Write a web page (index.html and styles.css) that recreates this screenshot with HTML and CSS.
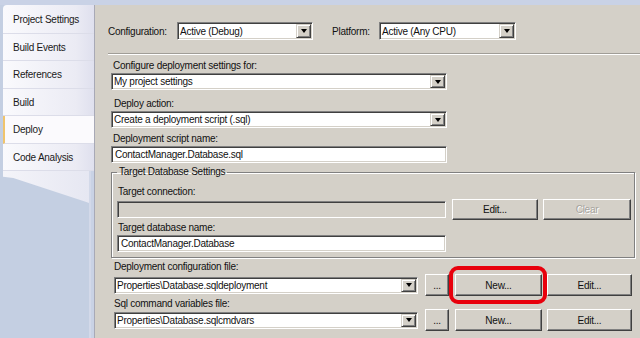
FILE: index.html
```html
<!DOCTYPE html>
<html lang="en">
<head>
    <meta charset="UTF-8">
    <meta name="viewport" content="width=device-width, initial-scale=1.0">
    <title>Project Properties - Deploy</title>
    <link rel="stylesheet" href="styles.css">
</head>
<body>
    <div class="window">
        <div class="sidebar">
            <ul class="tabs">
                <li class="tab">Project Settings</li>
                <li class="tab">Build Events</li>
                <li class="tab">References</li>
                <li class="tab">Build</li>
                <li class="tab active">Deploy</li>
                <li class="tab">Code Analysis</li>
            </ul>
            <div class="tabs-tail"></div>
        </div>

        <div class="panel">
            <div class="config-row">
                <span class="config-label">Configuration:</span>
                <div class="combo combo-config">
                    <span class="combo-text">Active (Debug)</span>
                    <span class="combo-btn"></span>
                </div>
                <span class="platform-label">Platform:</span>
                <div class="combo combo-platform">
                    <span class="combo-text">Active (Any CPU)</span>
                    <span class="combo-btn"></span>
                </div>
            </div>
            <div class="separator"></div>

            <div class="form">
                <div class="field-label">Configure deployment settings for:</div>
                <div class="combo wide">
                    <span class="combo-text">My project settings</span>
                    <span class="combo-btn"></span>
                </div>

                <div class="field-label deploy-action">Deploy action:</div>
                <div class="combo wide">
                    <span class="combo-text">Create a deployment script (.sql)</span>
                    <span class="combo-btn"></span>
                </div>

                <div class="field-label">Deployment script name:</div>
                <div class="textbox wide">ContactManager.Database.sql</div>

                <fieldset class="group">
                    <legend>Target Database Settings</legend>
                    <div class="group-label first">Target connection:</div>
                    <div class="group-row">
                        <div class="textbox group-field disabled"></div>
                        <button class="btn btn-edit">Edit...</button>
                        <button class="btn btn-clear" disabled>Clear</button>
                    </div>
                    <div class="group-label">Target database name:</div>
                    <div class="textbox group-field">ContactManager.Database</div>
                </fieldset>

                <div class="field-label file-label">Deployment configuration file:</div>
                <div class="file-row">
                    <div class="combo file-combo">
                        <span class="combo-text">Properties\Database.sqldeployment</span>
                        <span class="combo-btn"></span>
                    </div>
                    <button class="btn btn-browse">...</button>
                    <div class="highlight">
                        <button class="btn btn-new">New...</button>
                    </div>
                    <button class="btn btn-file-edit">Edit...</button>
                </div>

                <div class="field-label sql-label">Sql command variables file:</div>
                <div class="file-row">
                    <div class="combo file-combo">
                        <span class="combo-text">Properties\Database.sqlcmdvars</span>
                        <span class="combo-btn"></span>
                    </div>
                    <button class="btn btn-browse">...</button>
                    <button class="btn btn-new btn-new-plain">New...</button>
                    <button class="btn btn-file-edit">Edit...</button>
                </div>
            </div>
        </div>
    </div>
</body>
</html>
```

FILE: styles.css
```css
* {
    box-sizing: border-box;
}
body {
    margin: 0;
    font-family: "Liberation Sans", Arial, sans-serif;
    font-size: 10px;
    letter-spacing: -0.25px;
    color: #111;
    background-color: #c9d2e6;
    overflow: hidden;
}
.window {
    display: flex;
    height: 333px;
    margin-top: 5px;
}

/* left tab strip */
.sidebar {
    width: 94px;
    background: linear-gradient(to right, #c4cfe2 89px, #d3d9e9 89px, #d3d9e9 91px, #c9d2e5 91px);
}
.tabs {
    list-style: none;
    margin: 0 0 0 3px;
    padding: 1px 0 0;
    width: 91px;
    background: linear-gradient(to right, #fafafd, #ebebf4 80%, #dfe0ee);
    border-top-left-radius: 4px;
}
.tab {
    height: 27.5px;
    line-height: 27px;
    padding-left: 10px;
    border-bottom: 1px solid #dcdde9;
    color: #1a1a1a;
}
.tab.active {
    background-color: #fbfafd;
    border-left: 2px solid #f0c46c;
    padding-left: 8px;
}
.tabs-tail {
    margin-left: 3px;
    width: 86px;
    height: 32px;
    background: linear-gradient(to right, #f4f4f9, #e6e7f2);
    clip-path: polygon(0 0, 100% 0, 100% 100%, 96% 96%, 12% 22%, 0 18%);
}

/* right property page */
.panel {
    flex: 1;
    background-color: #d4d0c8;
    border-left: 1px solid #a8a9b6;
}
.config-row {
    display: flex;
    align-items: center;
    height: 35px;
    padding: 17px 0 0 13px;
}
.config-label {
    width: 69px;
}
.platform-label {
    width: 47px;
    margin-left: 19px;
}
.combo-config {
    width: 136px;
    height: 18px;
}
.combo-platform {
    width: 137px;
    height: 18px;
}
.separator {
    margin: 13px 0 0 13px;
    height: 2px;
    border-top: 1px solid #a09d97;
    border-bottom: 1px solid #fff;
}

/* sunken controls */
.combo, .textbox {
    background-color: #fff;
    border: 1px solid;
    border-color: #808080 #fff #fff #808080;
    box-shadow: inset 1px 1px #404040, inset -1px -1px #d4d0c8;
}
.combo {
    display: flex;
    align-items: stretch;
    padding: 1px;
}
.combo-text {
    flex: 1;
    padding-left: 1px;
    white-space: nowrap;
    overflow: hidden;
    display: flex;
    align-items: center;
}
.combo-btn {
    width: 15px;
    background-color: #d4d0c8;
    border: 1px solid;
    border-color: #d4d0c8 #404040 #404040 #d4d0c8;
    box-shadow: inset 1px 1px #fff, inset -1px -1px #808080;
    display: flex;
    align-items: center;
    justify-content: center;
}
.combo-btn::after {
    content: "";
    border-left: 3.5px solid transparent;
    border-right: 3.5px solid transparent;
    border-top: 4px solid #000;
}
.textbox {
    height: 17px;
    line-height: 15px;
    padding-left: 3px;
    white-space: nowrap;
}
.textbox.disabled {
    background-color: #d4d0c8;
}

/* deployment form */
.form {
    padding-left: 16px;
}
.field-label {
    padding-top: 3px;
    line-height: 15px;
    padding-left: 2px;
}
.deploy-action {
    margin-top: 3px;
    padding-left: 3px;
}
.wide {
    width: 336px;
    height: 17px;
}
.group {
    margin: 2px 0 0;
    width: 524px;
    padding: 0 3px 5px 5px;
    border: 1px solid #808080;
    box-shadow: inset 1px 1px #fff, 1px 1px #fff;
}
.group legend {
    padding: 0 2px;
    line-height: 14px;
}
.group-label {
    line-height: 15px;
    padding-left: 1px;
}
.group-label.first {
    margin-top: 5px;
}
.group-row {
    display: flex;
    align-items: center;
    height: 21px;
}
.group-field {
    width: 329px;
}

/* raised buttons */
.btn {
    font: inherit;
    letter-spacing: inherit;
    color: #111;
    background-color: #d4d0c8;
    border: 1px solid;
    border-color: #fff #404040 #404040 #fff;
    box-shadow: inset -1px -1px #808080;
    padding: 0;
    height: 21px;
}
.btn:disabled {
    color: #a7a49e;
    text-shadow: 1px 1px #fff;
}
.btn-edit {
    width: 86px;
    margin-left: 6px;
}
.btn-clear {
    width: 88px;
    margin-left: 5px;
}
.file-label {
    padding-top: 2px;
    line-height: 14px;
    padding-left: 3px;
}
.sql-label {
    padding-top: 2px;
    line-height: 11px;
    padding-left: 3px;
}
.file-row {
    display: flex;
    align-items: center;
    height: 22px;
}
.file-row .btn {
    height: 22px;
}
.file-combo {
    width: 304px;
    height: 17px;
    margin-left: 3px;
}
.btn-browse {
    width: 24px;
    margin-left: 7px;
}
.btn-new {
    width: 87px;
}
.btn-new-plain {
    margin-left: 6px;
}
.btn-file-edit {
    width: 85px;
    margin-left: 5px;
}
.highlight {
    position: relative;
    margin-left: 6px;
    display: flex;
}
.highlight::after {
    content: "";
    position: absolute;
    top: -8px;
    left: -6px;
    right: -5px;
    bottom: -8px;
    border: 4px solid #e8000c;
    border-radius: 9px;
}
```
